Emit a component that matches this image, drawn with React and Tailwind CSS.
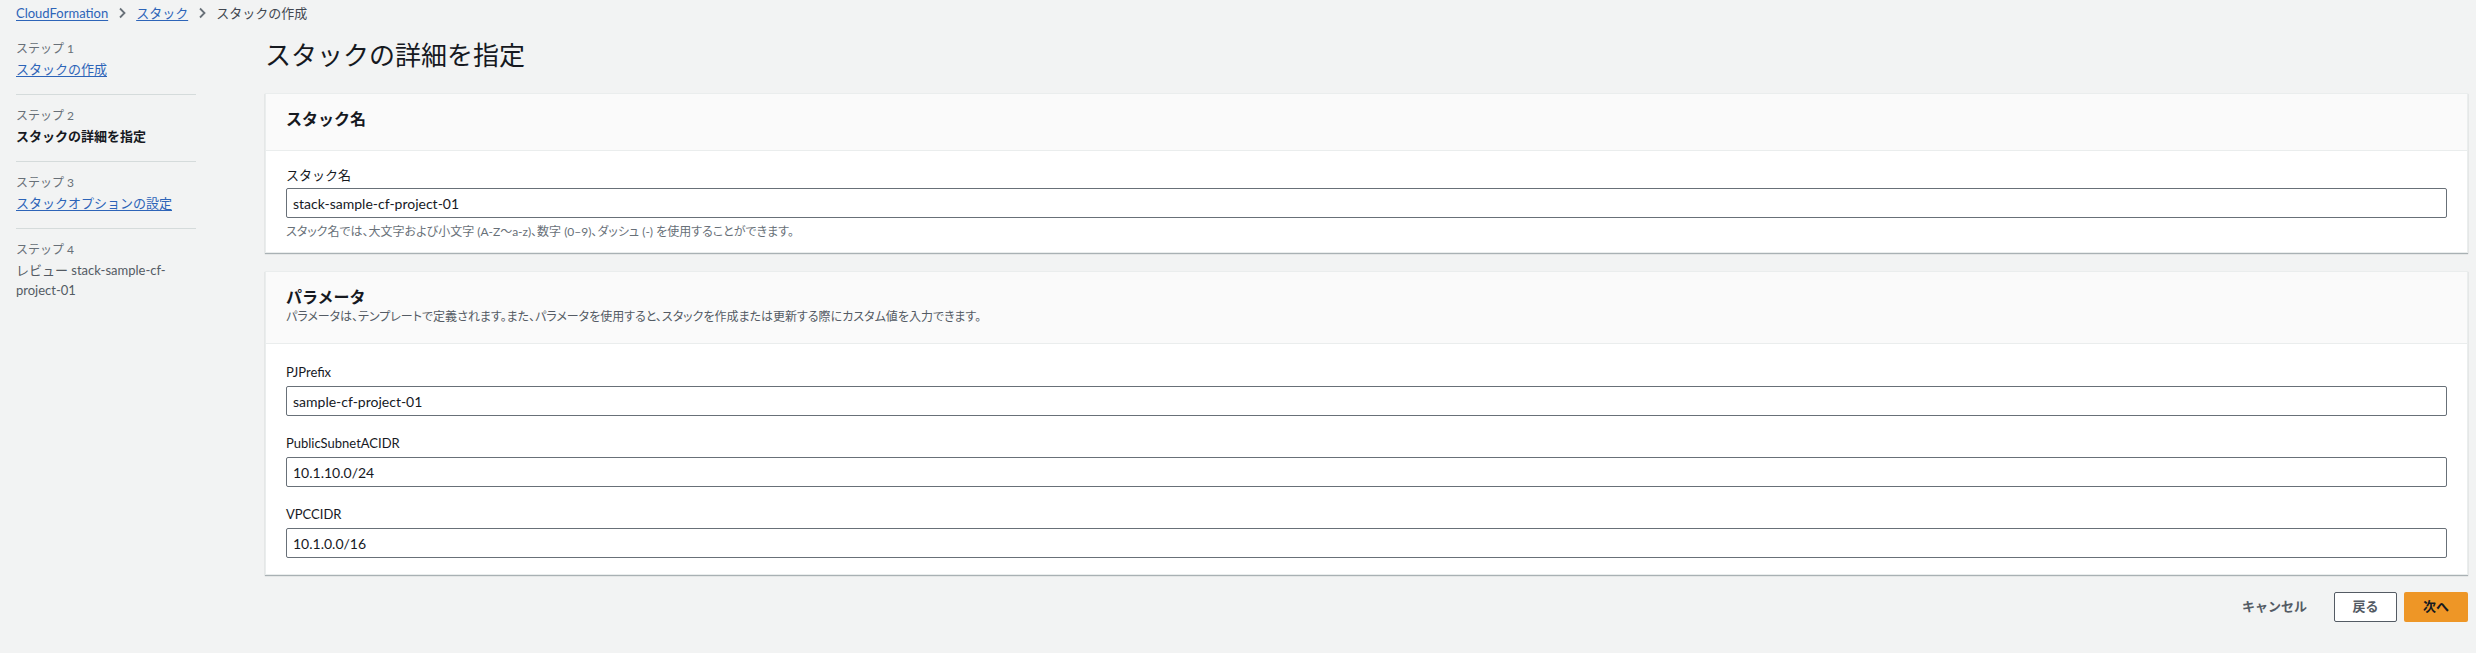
import React from "react";

const steps = [
  { label: "ステップ 1", title: "スタックの作成", kind: "link" },
  { label: "ステップ 2", title: "スタックの詳細を指定", kind: "current" },
  { label: "ステップ 3", title: "スタックオプションの設定", kind: "link" },
  { label: "ステップ 4", title: "レビュー stack-sample-cf-project-01", kind: "plain" },
];

const params = [
  { name: "PJPrefix", value: "sample-cf-project-01" },
  { name: "PublicSubnetACIDR", value: "10.1.10.0/24" },
  { name: "VPCCIDR", value: "10.1.0.0/16" },
];

function Chevron() {
  return (
    <svg width="10" height="12" viewBox="0 0 10 12" className="mx-[9px]">
      <path d="M3 1.5 L7.5 6 L3 10.5" fill="none" stroke="#687078" strokeWidth="1.8" />
    </svg>
  );
}

function TextInput({ value }) {
  return (
    <input
      type="text"
      defaultValue={value}
      className="w-full h-[30px] border border-[#687078] rounded-[2px] bg-white px-[6px] text-[14px] text-[#16191f] outline-none"
    />
  );
}

function Card({ title, description, children }) {
  return (
    <div className="bg-white border border-[#eaeded] shadow-[0_1px_1px_0_rgba(0,28,36,0.3)]">
      <div className="bg-[#fafafa] border-b border-[#eaeded] px-5 pt-[13px] pb-[18px] min-h-[57px]">
        <h2 className="text-[16px] leading-[24px] font-bold text-[#16191f]">{title}</h2>
        {description && (
          <p className="text-[12px] leading-[16px] text-[#545b64] [font-feature-settings:'palt']">
            {description}
          </p>
        )}
      </div>
      {children}
    </div>
  );
}

export default function App() {
  return (
    <div
      className="min-h-screen bg-[#f2f3f3] text-[#16191f]"
      style={{ fontFamily: "Lato, 'Noto Sans CJK JP', sans-serif" }}
    >
      {/* breadcrumb */}
      <div className="flex items-center px-4 pt-[4px] h-[22px] text-[13px] leading-[18px]">
        <a className="text-[#2d64b8] underline underline-offset-2">CloudFormation</a>
        <Chevron />
        <a className="text-[#2d64b8] underline underline-offset-2">スタック</a>
        <Chevron />
        <span className="text-[#414750]">スタックの作成</span>
      </div>

      <div className="flex">
        {/* wizard steps */}
        <nav className="w-[180px] ml-4 pt-[19px] shrink-0">
          {steps.map((s, i) => (
            <div
              key={s.label}
              className={
                i < steps.length - 1
                  ? "pb-[15px] mb-[13px] border-b border-[#d5dbdb]"
                  : ""
              }
            >
              <div className="text-[12px] leading-[16px] text-[#687078]">{s.label}</div>
              <div
                className={
                  s.kind === "link"
                    ? "mt-[2px] text-[13px] leading-[20px] text-[#2d64b8] underline underline-offset-2"
                    : s.kind === "current"
                    ? "mt-[2px] text-[13px] leading-[20px] font-bold text-[#16191f]"
                    : "mt-[2px] text-[13px] leading-[20px] text-[#545b64] w-[160px]"
                }
              >
                {s.title}
              </div>
            </div>
          ))}
        </nav>

        {/* main */}
        <main className="flex-1 ml-[69px] mr-2 pt-[15px]">
          <h1 className="text-[26px] leading-[36px] text-[#16191f] mb-[20px]">
            スタックの詳細を指定
          </h1>

          <Card title="スタック名">
            <div className="px-5 pt-[15px] pb-[12px]">
              <label className="block text-[13px] leading-[18px] mb-[4px]">スタック名</label>
              <TextInput value="stack-sample-cf-project-01" />
              <p className="mt-[6px] text-[12px] leading-[16px] text-[#687078] [font-feature-settings:'palt']">
                スタック名では、大文字および小文字 (A-Z〜a-z)、数字 (0–9)、ダッシュ (-) を使用することができます。
              </p>
            </div>
          </Card>

          <div className="mt-[18px]">
            <Card
              title="パラメータ"
              description="パラメータは、テンプレートで定義されます。また、パラメータを使用すると、スタックを作成または更新する際にカスタム値を入力できます。"
            >
              <div className="px-5 pt-[19px] pb-[16px] flex flex-col gap-[18px]">
                {params.map((p) => (
                  <div key={p.name}>
                    <label className="block text-[13px] leading-[18px] mb-[5px]">{p.name}</label>
                    <TextInput value={p.value} />
                  </div>
                ))}
              </div>
            </Card>
          </div>

          <div className="flex justify-end items-center gap-[7px] mt-[17px]">
            <button className="h-[30px] px-[20px] text-[13px] font-bold text-[#545b64]">
              キャンセル
            </button>
            <button className="h-[30px] w-[63px] border border-[#545b64] rounded-[2px] bg-white text-[13px] font-bold text-[#545b64]">
              戻る
            </button>
            <button className="h-[30px] w-[64px] rounded-[2px] bg-[#ee9626] text-[13px] font-bold text-[#16191f]">
              次へ
            </button>
          </div>
        </main>
      </div>
    </div>
  );
}
